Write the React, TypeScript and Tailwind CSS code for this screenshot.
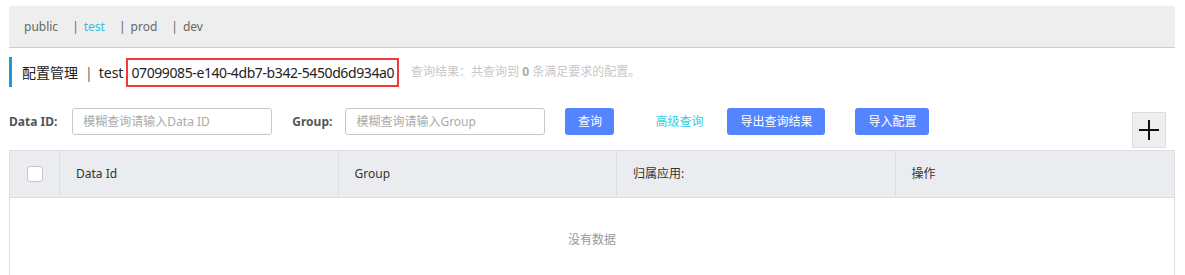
import React from "react";

const tabs = ["public", "test", "prod", "dev"];
const columns = ["Data Id", "Group", "归属应用:", "操作"];

const font = "font-['Noto_Sans','Noto_Sans_CJK_SC',sans-serif]";

const App = () => {
  return (
    <div className={`w-[1185px] h-[275px] overflow-hidden bg-white pl-[9px] pr-[10px] ${font}`}>
      {/* namespace tabs */}
      <div className="mt-[6px] h-[42px] bg-[#eeeeee] border-b border-[#cccccc] flex items-center pl-[15px] text-[12px] text-[#666]">
        {tabs.map((t, i) => (
          <div key={t} className={`flex items-center ${i > 0 ? "ml-[14px]" : ""}`}>
            {i > 0 && <span className="mr-[5px] text-[#666]">|</span>}
            <span className={t === "test" ? "text-[#33bfdf]" : "text-[#666]"}>{t}</span>
          </div>
        ))}
      </div>

      {/* title */}
      <div className="mt-[9px] h-[30px] border-l-[3px] border-[#1a9bd6] flex items-center pl-[10px] text-[14px] text-[#222]">
        <span>配置管理</span>
        <span className="ml-[7px] mr-[6px] text-[#666]">|</span>
        <span>test</span>
        <span className="ml-[3px] h-[29px] border-2 border-[#f33a3a] px-[3px] flex items-center tracking-[-0.4px]">
          07099085-e140-4db7-b342-5450d6d934a0
        </span>
        <span className="ml-[12px] text-[12px] text-[#c8c8c8]">
          查询结果：共查询到 <b className="text-[#aaa]">0</b> 条满足要求的配置。
        </span>
      </div>

      {/* filter row */}
      <div className="mt-[21px] flex items-start text-[12px]">
        <div className="h-[27px] flex items-center font-bold text-[#555]">Data ID:</div>
        <input
          className="ml-[15px] w-[200px] h-[27px] border border-[#c4c6cf] rounded-[3px] px-[10px] text-[12px] outline-none placeholder:text-[#aaa]"
          placeholder="模糊查询请输入Data ID"
        />
        <div className="ml-[20px] h-[27px] flex items-center font-bold text-[#555]">Group:</div>
        <input
          className="ml-[13px] w-[200px] h-[27px] border border-[#c4c6cf] rounded-[3px] px-[10px] text-[12px] outline-none placeholder:text-[#aaa]"
          placeholder="模糊查询请输入Group"
        />
        <button className="ml-[20px] w-[49px] h-[27px] rounded-[3px] bg-[#5584ff] text-white">查询</button>
        <span className="ml-[41px] h-[27px] flex items-center text-[#33cde5]">高级查询</span>
        <button className="ml-[24px] w-[98px] h-[27px] rounded-[3px] bg-[#5584ff] text-white">导出查询结果</button>
        <button className="ml-[30px] w-[74px] h-[27px] rounded-[3px] bg-[#5584ff] text-white">导入配置</button>
        <button className="ml-auto mr-[9px] mt-[4px] w-[34px] h-[36px] bg-[#eeeeee] border border-[#dddddd] flex items-center justify-center">
          <svg width="22" height="22" viewBox="0 0 22 22">
            <path d="M1 11h20M11 1v20" stroke="#111" strokeWidth="2" />
          </svg>
        </button>
      </div>

      {/* table */}
      <div className="mt-[2px] border border-[#dcdee3] text-[12px]">
        <div className="h-[47px] bg-[#ebecf0] border-b border-[#dcdee3] grid grid-cols-[50px_1fr_1fr_1fr_1fr] text-[#333]">
          <div className="flex items-center justify-center border-r border-[#dcdee3]">
            <span className="w-[16px] h-[16px] bg-white border border-[#c4c6cf] rounded-[3px]" />
          </div>
          {columns.map((c, i) => (
            <div
              key={c}
              className={`flex items-center pl-[16px] ${i < columns.length - 1 ? "border-r border-[#dcdee3]" : ""}`}
            >
              {c}
            </div>
          ))}
        </div>
        <div className="h-[84px] flex items-center justify-center text-[#999]">没有数据</div>
      </div>
    </div>
  );
};

export default App;
